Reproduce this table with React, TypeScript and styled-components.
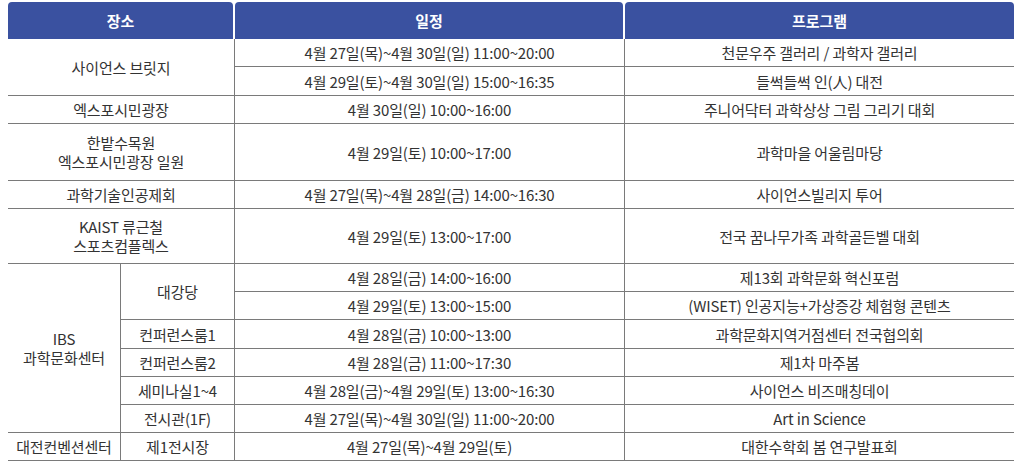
import React from "react";
import styled, { createGlobalStyle } from "styled-components";

const GlobalStyle = createGlobalStyle`
  body {
    margin: 0;
    background: #fff;
    font-family: "Noto Sans CJK KR", "Noto Sans", sans-serif;
  }
`;

interface Cell {
  text: string;
  row: string;
  col: string;
}

// 장소 / 세부 장소 / 일정 / 프로그램
const cells: Cell[] = [
  { text: "사이언스 브릿지", row: "2 / 4", col: "1 / 3" },
  { text: "4월 27일(목)~4월 30일(일) 11:00~20:00", row: "2", col: "3" },
  { text: "천문우주 갤러리 / 과학자 갤러리", row: "2", col: "4" },
  { text: "4월 29일(토)~4월 30일(일) 15:00~16:35", row: "3", col: "3" },
  { text: "들썩들썩 인(人) 대전", row: "3", col: "4" },
  { text: "엑스포시민광장", row: "4", col: "1 / 3" },
  { text: "4월 30일(일) 10:00~16:00", row: "4", col: "3" },
  { text: "주니어닥터 과학상상 그림 그리기 대회", row: "4", col: "4" },
  { text: "한밭수목원\n엑스포시민광장 일원", row: "5", col: "1 / 3" },
  { text: "4월 29일(토) 10:00~17:00", row: "5", col: "3" },
  { text: "과학마을 어울림마당", row: "5", col: "4" },
  { text: "과학기술인공제회", row: "6", col: "1 / 3" },
  { text: "4월 27일(목)~4월 28일(금) 14:00~16:30", row: "6", col: "3" },
  { text: "사이언스빌리지 투어", row: "6", col: "4" },
  { text: "KAIST 류근철\n스포츠컴플렉스", row: "7", col: "1 / 3" },
  { text: "4월 29일(토) 13:00~17:00", row: "7", col: "3" },
  { text: "전국 꿈나무가족 과학골든벨 대회", row: "7", col: "4" },
  { text: "IBS\n과학문화센터", row: "8 / 14", col: "1" },
  { text: "대강당", row: "8 / 10", col: "2" },
  { text: "4월 28일(금) 14:00~16:00", row: "8", col: "3" },
  { text: "제13회 과학문화 혁신포럼", row: "8", col: "4" },
  { text: "4월 29일(토) 13:00~15:00", row: "9", col: "3" },
  { text: "(WISET) 인공지능+가상증강 체험형 콘텐츠", row: "9", col: "4" },
  { text: "컨퍼런스룸1", row: "10", col: "2" },
  { text: "4월 28일(금) 10:00~13:00", row: "10", col: "3" },
  { text: "과학문화지역거점센터 전국협의회", row: "10", col: "4" },
  { text: "컨퍼런스룸2", row: "11", col: "2" },
  { text: "4월 28일(금) 11:00~17:30", row: "11", col: "3" },
  { text: "제1차 마주봄", row: "11", col: "4" },
  { text: "세미나실1~4", row: "12", col: "2" },
  { text: "4월 28일(금)~4월 29일(토) 13:00~16:30", row: "12", col: "3" },
  { text: "사이언스 비즈매칭데이", row: "12", col: "4" },
  { text: "전시관(1F)", row: "13", col: "2" },
  { text: "4월 27일(목)~4월 30일(일) 11:00~20:00", row: "13", col: "3" },
  { text: "Art in Science", row: "13", col: "4" },
  { text: "대전컨벤션센터", row: "14", col: "1" },
  { text: "제1전시장", row: "14", col: "2" },
  { text: "4월 27일(목)~4월 29일(토)", row: "14", col: "3" },
  { text: "대한수학회 봄 연구발표회", row: "14", col: "4" },
];

const App = () => {
  return (
    <Page>
      <GlobalStyle />
      <Table>
        <HeadCell $col="1 / 3">장소</HeadCell>
        <HeadCell $col="3">일정</HeadCell>
        <HeadCell $col="4" $last>
          프로그램
        </HeadCell>
        {cells.map((cell, index) => (
          <BodyCell
            key={index}
            $row={cell.row}
            $col={cell.col}
            $last={cell.col === "4"}
          >
            {cell.text}
          </BodyCell>
        ))}
      </Table>
    </Page>
  );
};

const Page = styled.div`
  padding: 2px 14px 0 8px;
`;

const Table = styled.div`
  display: grid;
  grid-template-columns: 113px 114px 390px 389px;
  grid-template-rows: 37px 28px 29px 28px 57px 28px 55px 28px 28px 29px 28px 28px 28px 28px;
  width: 1006px;
`;

const HeadCell = styled.div<{ $col: string; $last?: boolean }>`
  grid-row: 1;
  grid-column: ${({ $col }) => $col};
  margin-right: ${({ $last }) => ($last ? "0" : "2px")};
  display: flex;
  align-items: center;
  justify-content: center;
  background-color: #3a51a0;
  border-radius: 4px 4px 0 0;
  color: #fff;
  font-size: 15px;
  font-weight: 700;
`;

const BodyCell = styled.div<{ $row: string; $col: string; $last: boolean }>`
  grid-row: ${({ $row }) => $row};
  grid-column: ${({ $col }) => $col};
  display: flex;
  align-items: center;
  justify-content: center;
  text-align: center;
  white-space: pre-line;
  border-bottom: 1px solid #7a7a7a;
  border-right: ${({ $last }) => ($last ? "none" : "1px solid #7a7a7a")};
  color: #333;
  font-size: 15px;
  line-height: 19px;
  letter-spacing: -0.15px;
`;

export default App;
